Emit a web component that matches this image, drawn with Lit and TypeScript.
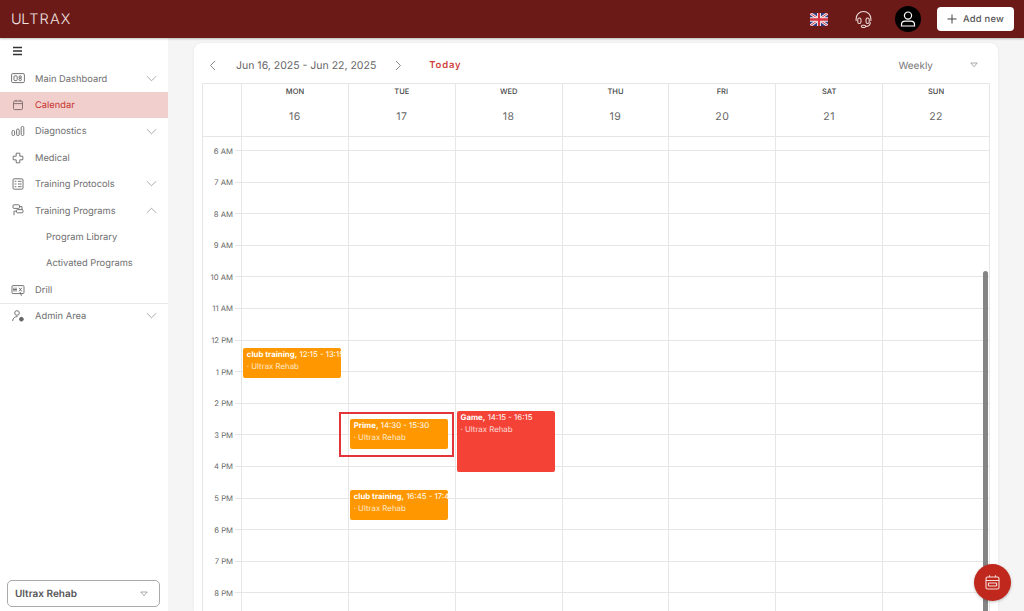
import { LitElement, html, css, svg } from 'lit';
import { customElement } from 'lit/decorators.js';

const HOUR = 31.6;
const FIRST_LINE = 13.5; // distance from top of the grid body to the 6 AM line

const chevronDown = html`<svg class="chev" viewBox="0 0 12 12"><path d="M1 3.5 6 8.5 11 3.5" /></svg>`;
const chevronUp = html`<svg class="chev" viewBox="0 0 12 12"><path d="M1 8.5 6 3.5 11 8.5" /></svg>`;
const caret = html`<svg class="caret" viewBox="0 0 10 7"><path d="M1 1H9L5 5.6Z" /></svg>`;

const icons: Record<string, unknown> = {
  dash: svg`<rect x="0.6" y="2.6" width="12.8" height="9" rx="1.2" /><rect x="3" y="4.8" width="3.2" height="4.8" rx="1" /><circle cx="9.2" cy="6" r="1.2" /><circle cx="9.2" cy="8.4" r="1.2" />`,
  calendar: svg`<rect x="2.5" y="3" width="9" height="8.6" rx="1.2" /><path d="M2.5 5.6H11.5M5 1.8V3.6M9 1.8V3.6" />`,
  bars: svg`<rect x="1" y="6.5" width="2.6" height="5" rx="1.2" /><rect x="5.6" y="5" width="2.6" height="6.5" rx="1.2" /><rect x="10.2" y="2.5" width="2.6" height="9" rx="1.2" />`,
  medical: svg`<path d="M5.2 2.2H8.8V5.2H11.8V8.8H8.8V11.8H5.2V8.8H2.2V5.2H5.2Z" stroke-linejoin="round" />`,
  protocols: svg`<rect x="2" y="1.8" width="10" height="10.4" rx="1.2" /><path d="M7 4.3H10.5M7 7H10.5M7 9.7H10.5M3.6 4.3H5.4M3.6 7H5.4M3.6 9.7H5.4" />`,
  programs: svg`<rect x="2" y="1.8" width="6.5" height="3.6" rx="1" /><rect x="5.5" y="6.6" width="6.5" height="3.2" rx="1" /><path d="M8.5 3.6H11V6.6M5.5 8.2H3V12.2" />`,
  drill: svg`<rect x="1" y="2.6" width="12" height="8" rx="1" /><path d="M3 4.6V8.6M5 4.6V8.6M2 6.6H6M8 4.8 10.8 8.4M10.8 4.8 8 8.4M9 9 10.5 12.8" />`,
  admin: svg`<circle cx="6" cy="4" r="2.3" /><path d="M1.6 12C2 8.8 3.8 7.6 6.6 7.6" /><circle cx="10.4" cy="10.2" r="1.9" fill="currentColor" />`,
};

interface NavItem {
  label: string;
  icon?: string;
  chevron?: 'down' | 'up';
  active?: boolean;
  sub?: boolean;
  divider?: boolean;
}

const NAV: NavItem[] = [
  { label: 'Main Dashboard', icon: 'dash', chevron: 'down' },
  { label: 'Calendar', icon: 'calendar', active: true },
  { label: 'Diagnostics', icon: 'bars', chevron: 'down' },
  { label: 'Medical', icon: 'medical' },
  { label: 'Training Protocols', icon: 'protocols', chevron: 'down' },
  { label: 'Training Programs', icon: 'programs', chevron: 'up' },
  { label: 'Program Library', sub: true },
  { label: 'Activated Programs', sub: true },
  { label: 'Drill', icon: 'drill', divider: true },
  { label: 'Admin Area', icon: 'admin', chevron: 'down' },
];

const DAYS = [
  ['MON', '16'],
  ['TUE', '17'],
  ['WED', '18'],
  ['THU', '19'],
  ['FRI', '20'],
  ['SAT', '21'],
  ['SUN', '22'],
];

const HOURS = ['6 AM', '7 AM', '8 AM', '9 AM', '10 AM', '11 AM', '12 PM', '1 PM', '2 PM', '3 PM', '4 PM', '5 PM', '6 PM', '7 PM', '8 PM'];

interface CalEvent {
  day: number;
  title: string;
  time: string;
  start: number;
  end: number;
  color: string;
  selected?: boolean;
}

const EVENTS: CalEvent[] = [
  { day: 0, title: 'club training', time: '12:15 - 13:15', start: 12.25, end: 13.25, color: '#ff9800' },
  { day: 1, title: 'Prime', time: '14:30 - 15:30', start: 14.5, end: 15.5, color: '#ff9800', selected: true },
  { day: 1, title: 'club training', time: '16:45 - 17:45', start: 16.75, end: 17.75, color: '#ff9800' },
  { day: 2, title: 'Game', time: '14:15 - 16:15', start: 14.25, end: 16.25, color: '#f44336' },
];

const topOf = (h: number) => FIRST_LINE + (h - 6) * HOUR;

@customElement('app-root')
export class AppRoot extends LitElement {
  static styles = css`
    :host {
      display: flex;
      flex-direction: column;
      height: 100vh;
      overflow: hidden;
      font-family: Inter, 'Liberation Sans', sans-serif;
      text-rendering: geometricPrecision;
      background: #f5f5f5;
      color: #666;
    }
    .top {
      flex: none;
      height: 38px;
      background: #6b1a17;
      box-shadow: 0 1px 2px rgba(0, 0, 0, 0.25);
      display: flex;
      align-items: center;
      padding: 0 10px 0 11px;
      position: relative;
      z-index: 2;
    }
    .logo {
      font-size: 14.5px;
      font-weight: 300;
      letter-spacing: 1.15px;
      color: #f0e4e3;
      margin-right: auto;
    }
    .logo span {
      letter-spacing: -0.4px;
    }
    .flag {
      width: 18px;
      height: 13px;
      margin-right: 26px;
    }
    .headset {
      width: 19px;
      height: 19px;
      margin-right: 22px;
      fill: none;
      stroke: #eedcdb;
      stroke-width: 1;
    }
    .avatar {
      width: 26px;
      height: 26px;
      border-radius: 50%;
      background: #000;
      display: flex;
      align-items: center;
      justify-content: center;
      margin-right: 16px;
    }
    .avatar svg {
      width: 18px;
      height: 18px;
      fill: none;
      stroke: #fff;
      stroke-width: 1.2;
    }
    .add {
      width: 77px;
      height: 24px;
      box-sizing: border-box;
      background: #fff;
      border-radius: 4px;
      display: flex;
      align-items: center;
      justify-content: center;
      gap: 6px;
      font-size: 9.4px;
      font-weight: 500;
      letter-spacing: 0.2px;
      color: #555;
    }
    .add svg {
      width: 10px;
      height: 10px;
      stroke: #444;
      stroke-width: 1;
      fill: none;
    }
    .body {
      flex: 1;
      min-height: 0;
      display: flex;
    }
    .side {
      flex: none;
      width: 168px;
      background: #fff;
      display: flex;
      flex-direction: column;
      padding-bottom: 4px;
      box-sizing: border-box;
    }
    .burger {
      height: 27.2px;
      box-sizing: border-box;
      display: flex;
      align-items: center;
      padding: 0 0 2px 12px;
    }
    .burger svg {
      width: 11px;
      height: 10px;
      stroke: #333;
      stroke-width: 1.4;
    }
    .item {
      height: 26.4px;
      box-sizing: border-box;
      display: flex;
      align-items: center;
      padding: 0 11px;
      font-size: 9.3px;
      letter-spacing: 0.02px;
      color: #6d6d6d;
    }
    .item span {
      opacity: 0.99;
      padding-top: 1.5px;
    }
    .item.active {
      background: #f0cfcd;
      color: #c9302c;
    }
    .item.active .ic {
      color: #7a6a68;
    }
    .item.divider {
      box-shadow: 0 1px 0 #e8e8e8;
    }
    .item.sub {
      padding-left: 46px;
    }
    .ic {
      width: 14px;
      height: 14px;
      margin-right: 10px;
      fill: none;
      stroke: currentColor;
      stroke-width: 0.9;
      color: #666;
    }
    .chev {
      width: 11px;
      height: 11px;
      margin-left: auto;
      fill: none;
      stroke: #999;
      stroke-width: 0.9;
    }
    .org {
      margin: auto 8px 0 7px;
      height: 27px;
      box-sizing: border-box;
      border: 1px solid #aaa;
      border-radius: 5px;
      display: flex;
      align-items: center;
      justify-content: space-between;
      padding: 0 11px 0 7px;
      font-size: 10px;
      font-weight: 600;
      color: #555;
    }
    .caret {
      width: 8px;
      height: 6px;
      fill: none;
      stroke: #888;
      stroke-width: 0.9;
    }
    .main {
      flex: 1;
      min-width: 0;
      padding: 5px 26px 0;
      display: flex;
    }
    .card {
      flex: 1;
      min-width: 0;
      background: #fff;
      border-radius: 8px 8px 0 0;
      padding: 0 8px;
      display: flex;
      flex-direction: column;
      box-shadow: 0 0 3px rgba(0, 0, 0, 0.06);
    }
    .bar {
      flex: none;
      height: 40px;
      display: flex;
      align-items: center;
      padding: 4px 12px 0 7px;
      box-sizing: border-box;
    }
    .bar .nav {
      width: 7px;
      height: 11px;
      fill: none;
      stroke: #888;
      stroke-width: 1;
    }
    .range {
      font-size: 10.5px;
      color: #666;
      margin: 0 19px 0 20px;
      white-space: nowrap;
    }
    .today {
      margin-left: 27px;
      padding-top: 1px;
      font-size: 9.5px;
      font-weight: 600;
      letter-spacing: 0.8px;
      color: #cf3f3a;
    }
    .weekly {
      margin-left: auto;
      padding-top: 1.5px;
      font-size: 10px;
      color: #777;
      margin-right: 37px;
    }
    .grid {
      flex: 1;
      min-height: 0;
      border: 1px solid #e6e6e6;
      border-bottom: 0;
      display: flex;
      flex-direction: column;
      position: relative;
      overflow: hidden;
    }
    .head {
      flex: none;
      height: 52px;
      display: grid;
      grid-template-columns: 38px repeat(7, 1fr);
      border-bottom: 1px solid #e6e6e6;
    }
    .head > div {
      border-left: 1px solid #e6e6e6;
      text-align: center;
    }
    .head > div:first-child {
      border-left: 0;
    }
    .dow {
      font-size: 7.5px;
      font-weight: 500;
      color: #444;
      margin-top: 3px;
      line-height: 10px;
    }
    .num {
      font-size: 10.5px;
      letter-spacing: 0.5px;
      color: #666;
      margin-top: 13px;
      line-height: 13px;
    }
    .rows {
      flex: 1;
      min-height: 0;
      display: grid;
      grid-template-columns: 38px repeat(7, 1fr);
    }
    .gutter {
      margin-top: -1.8px;
    }
    .lab {
      height: 31.6px;
      display: flex;
      align-items: center;
      justify-content: flex-end;
      padding-right: 8px;
      font-size: 7.7px;
      color: #666;
      position: relative;
    }
    .lab::after {
      content: '';
      position: absolute;
      right: 0;
      top: calc(50% - 1px);
      width: 6px;
      height: 1px;
      background: #e6e6e6;
    }
    .col {
      border-left: 1px solid #e6e6e6;
      position: relative;
      padding-top: 13px;
    }
    .cell {
      height: 31.6px;
      box-sizing: border-box;
      border-top: 1px solid #e6e6e6;
    }
    .ev {
      position: absolute;
      left: 0.8px;
      width: 98px;
      box-sizing: border-box;
      border-radius: 2px;
      padding: 1px 4px;
      overflow: hidden;
      white-space: nowrap;
      font-size: 7.85px;
      line-height: 11.5px;
      color: #fff;
    }
    .ev b {
      font-weight: 700;
    }
    .ev .who {
      opacity: 0.8;
    }
    .sel {
      position: absolute;
      left: -10px;
      width: 115px;
      height: 45px;
      box-sizing: border-box;
      border: 2px solid #e3343a;
    }
    .thumb {
      position: absolute;
      top: 187px;
      bottom: 0;
      right: 1px;
      width: 5px;
      border-radius: 3px 3px 0 0;
      background: #858585;
    }
    .fab {
      position: absolute;
      left: 974px;
      top: 564px;
      width: 37px;
      height: 37px;
      border-radius: 50%;
      background: #c0281e;
      box-shadow: 0 1px 3px rgba(0, 0, 0, 0.25);
      display: flex;
      align-items: center;
      justify-content: center;
    }
    .fab svg {
      width: 17px;
      height: 17px;
      fill: none;
      stroke: #f6dcd9;
      stroke-width: 1.1;
    }
  `;

  render() {
    return html`
      <header class="top">
        <span class="logo"><span>U</span>LTRAX</span>
        <svg class="flag" viewBox="0 0 18 12" preserveAspectRatio="none">
          <rect width="18" height="12" fill="#2b3f86" />
          <path d="M0 0 18 12M18 0 0 12" stroke="#f3e9e9" stroke-width="2.6" />
          <path d="M0 0 18 12M18 0 0 12" stroke="#d22f3f" stroke-width="0.9" />
          <path d="M9 0V12M0 6H18" stroke="#f3e9e9" stroke-width="4" />
          <path d="M9 0V12M0 6H18" stroke="#d22f3f" stroke-width="2.2" />
        </svg>
        <svg class="headset" viewBox="0 0 18 18">
          <path d="M2 10.5V8.5C2 4.5 5 1.5 9 1.5S16 4.5 16 8.5V10.5" />
          <rect x="3.6" y="7.5" width="3" height="5.2" rx="1.4" />
          <rect x="11.4" y="7.5" width="3" height="5.2" rx="1.4" />
          <path d="M15.5 11.5C15.5 14.2 13.6 15.5 11 15.5" />
          <rect x="7" y="14.4" width="4" height="2.2" rx="1.1" />
        </svg>
        <div class="avatar">
          <svg viewBox="0 0 18 18">
            <circle cx="9" cy="5.6" r="3.6" />
            <path d="M2.5 16V14.5C2.5 12.4 4.2 11.2 6.2 11.2H11.8C13.8 11.2 15.5 12.4 15.5 14.5V16Z" />
          </svg>
        </div>
        <div class="add">
          <svg viewBox="0 0 10 10"><path d="M5 0.5V9.5M0.5 5H9.5" /></svg>
          Add new
        </div>
      </header>
      <div class="body">
        <aside class="side">
          <div class="burger">
            <svg viewBox="0 0 11 10"><path d="M1 1.5H10M1 5H10M1 8.5H10" /></svg>
          </div>
          ${NAV.map(
            (n) => html`
              <div class="item ${n.active ? 'active' : ''} ${n.sub ? 'sub' : ''} ${n.divider ? 'divider' : ''}">
                ${n.icon ? html`<svg class="ic" viewBox="0 0 14 14">${icons[n.icon]}</svg>` : ''}
                <span>${n.label}</span>
                ${n.chevron === 'down' ? chevronDown : n.chevron === 'up' ? chevronUp : ''}
              </div>
            `
          )}
          <div class="org"><span>Ultrax Rehab</span>${caret}</div>
        </aside>
        <main class="main">
          <section class="card">
            <div class="bar">
              <svg class="nav" viewBox="0 0 7 11"><path d="M6 1 1.5 5.5 6 10" /></svg>
              <span class="range">Jun 16, 2025 - Jun 22, 2025</span>
              <svg class="nav" viewBox="0 0 7 11"><path d="M1 1 5.5 5.5 1 10" /></svg>
              <span class="today">Today</span>
              <span class="weekly">Weekly</span>
              ${caret}
            </div>
            <div class="grid">
              <div class="head">
                <div></div>
                ${DAYS.map(
                  ([d, n]) => html`<div><div class="dow">${d}</div><div class="num">${n}</div></div>`
                )}
              </div>
              <div class="rows">
                <div class="gutter">${HOURS.map((h) => html`<div class="lab">${h}</div>`)}</div>
                ${DAYS.map(
                  (_, i) => html`
                    <div class="col">
                      ${HOURS.map(() => html`<div class="cell"></div>`)}
                      ${EVENTS.filter((e) => e.day === i).map(
                        (e) => html`
                          ${e.selected
                            ? html`<div class="sel" style="top:${topOf(e.start) - 7}px"></div>`
                            : ''}
                          <div
                            class="ev"
                            style="top:${topOf(e.start)}px;height:${(e.end - e.start) * HOUR - 2}px;background:${e.color}"
                          >
                            <div><b>${e.title},</b> ${e.time}</div>
                            <div class="who">· Ultrax Rehab</div>
                          </div>
                        `
                      )}
                    </div>
                  `
                )}
              </div>
              <div class="thumb"></div>
            </div>
          </section>
        </main>
      </div>
      <div class="fab">
        <svg viewBox="0 0 17 17">
          <rect x="2" y="3" width="13" height="12" rx="1.6" />
          <path d="M2 6.5H15M5.5 1.2V3M11.5 1.2V3" />
          <rect x="4.4" y="9" width="8.2" height="3" rx="0.5" />
        </svg>
      </div>
    `;
  }
}
